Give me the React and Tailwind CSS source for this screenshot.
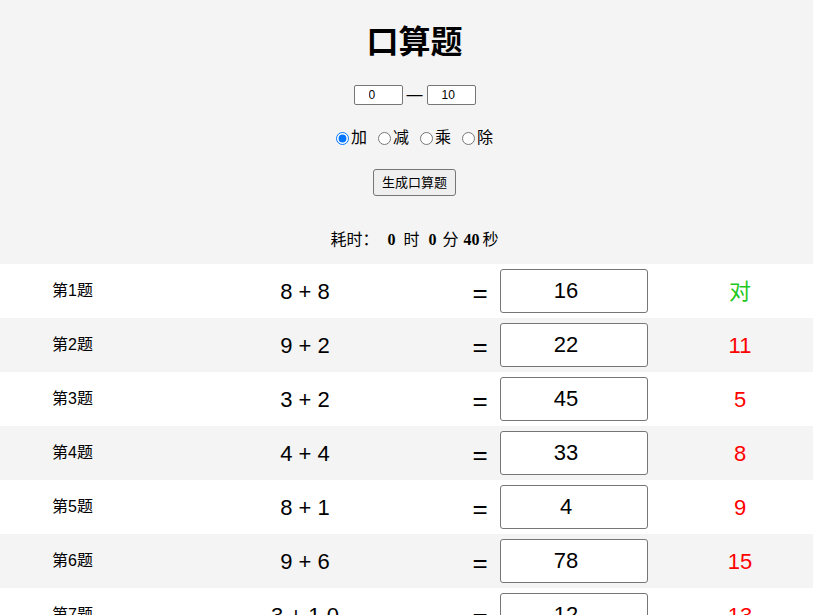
import { useState } from 'react';

const questions = [
  { expr: '8 + 8', answer: '16', result: '对', ok: true },
  { expr: '9 + 2', answer: '22', result: '11', ok: false },
  { expr: '3 + 2', answer: '45', result: '5', ok: false },
  { expr: '4 + 4', answer: '33', result: '8', ok: false },
  { expr: '8 + 1', answer: '4', result: '9', ok: false },
  { expr: '9 + 6', answer: '78', result: '15', ok: false },
  { expr: '3 + 1 0', answer: '12', result: '13', ok: false },
  { expr: '5 + 7', answer: '', result: '12', ok: false },
];

const ops = ['加', '减', '乘', '除'];

export default function App() {
  const [op, setOp] = useState('加');

  return (
    <div
      className="h-[615px] overflow-hidden bg-[#f4f4f4] text-black"
      style={{ fontFamily: '"Liberation Sans", "Noto Sans CJK SC", sans-serif' }}
    >
      {/* header */}
      <div className="flex flex-col items-center pt-[24px] pb-[12px] pl-[16px]">
        <h1 className="h-[36px] text-[32px] leading-[36px] font-bold">口算题</h1>

        <div className="mt-[25px] flex h-[20px] items-center gap-[4px]">
          <input
            defaultValue="0"
            className="h-[20px] w-[49px] rounded-[2px] border border-[#767676] bg-white pl-[14px] text-[12px] outline-none"
          />
          <span className="text-[16px] leading-none">—</span>
          <input
            defaultValue="10"
            className="h-[20px] w-[49px] rounded-[2px] border border-[#767676] bg-white pl-[14px] text-[12px] outline-none"
          />
        </div>

        <div className="mt-[23px] flex h-[20px] items-center gap-[11px] text-[16px]">
          {ops.map(o => (
            <label key={o} className="flex items-center gap-[2px]">
              <input
                type="radio"
                name="op"
                checked={op === o}
                onChange={() => setOp(o)}
                className="m-0 h-[13px] w-[13px]"
              />
              <span>{o}</span>
            </label>
          ))}
        </div>

        <button className="mt-[21px] h-[27px] rounded-[3px] border border-[#767676] bg-[#efefef] px-[8px] text-[13px]">
          生成口算题
        </button>

        <div className="mt-[32px] flex h-[24px] items-center text-[16px]">
          <span>耗时：</span>
          <b className="ml-[9px]" style={{ fontFamily: '"Liberation Serif", serif' }}>0</b>
          <span className="ml-[8px]">时</span>
          <b className="ml-[9px]" style={{ fontFamily: '"Liberation Serif", serif' }}>0</b>
          <span className="ml-[6px]">分</span>
          <b className="ml-[5px]" style={{ fontFamily: '"Liberation Serif", serif' }}>40</b>
          <span className="ml-[3px]">秒</span>
        </div>
      </div>

      {/* question rows */}
      <div>
        {questions.map((q, i) => (
          <div
            key={i}
            className={`flex h-[54px] items-center ${i % 2 === 0 ? 'bg-white' : 'bg-[#f4f4f4]'}`}
          >
            <div className="w-[145px] text-center text-[16px]">第{i + 1}题</div>
            <div className="w-[320px] text-center text-[22px]">{q.expr}</div>
            <div className="w-[30px] pt-[4px] text-center text-[26px] leading-none">=</div>
            <input
              defaultValue={q.answer}
              className="ml-[5px] h-[44px] w-[148px] rounded-[3px] border border-[#767676] bg-white pr-[16px] text-center text-[22px] outline-none"
            />
            <div
              className={`ml-[32px] w-[120px] text-center text-[22px] ${q.ok ? 'text-[#1ec81e]' : 'text-[#ff0000]'}`}
            >
              {q.result}
            </div>
          </div>
        ))}
      </div>
    </div>
  );
}
